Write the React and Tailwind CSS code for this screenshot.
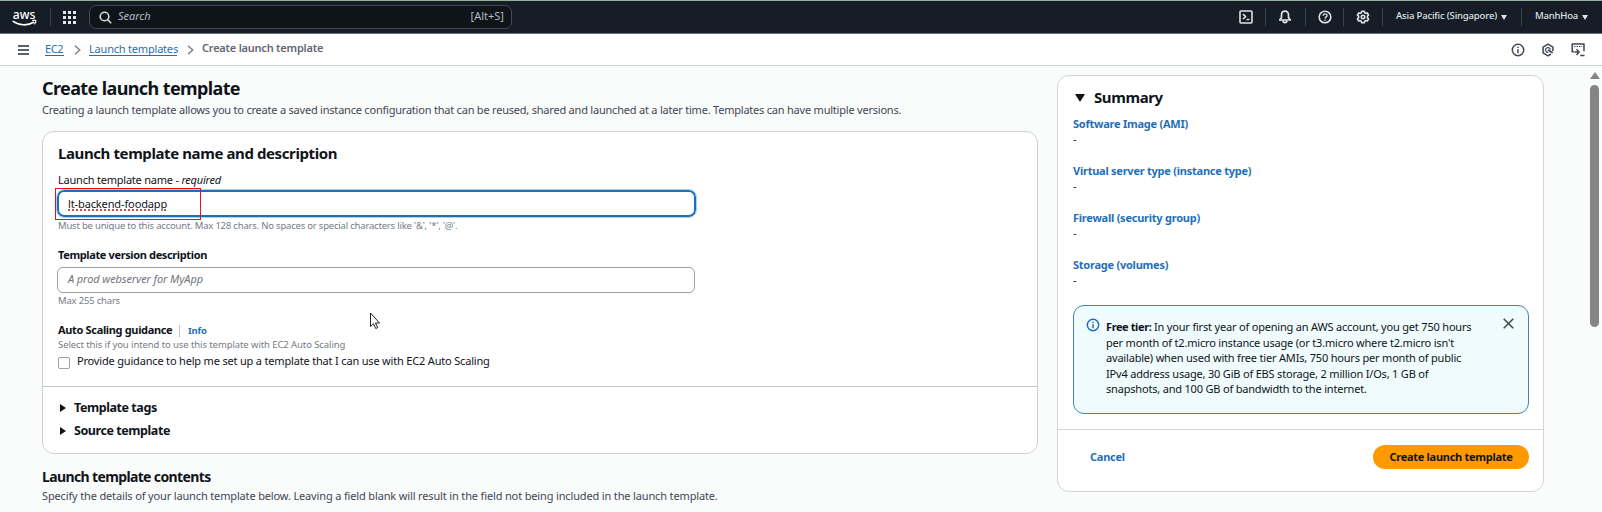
import React from "react";

function AwsLogo() {
  return (
    <svg width="26" height="26" viewBox="0 -6 26 26" fill="none">
      <text x="0.800" y="8.500" fontFamily="Noto Sans, sans-serif" fontSize="12.500" fontWeight="500" fill="#fff" textLength="22.500" lengthAdjust="spacingAndGlyphs">aws</text>
      <path d="M1.200 11.400c6 4.300 14.500 4.500 20.500.9" stroke="#fff" strokeWidth="1.600" strokeLinecap="round" />
      <path d="M20.600 10.500c1.200-.4 2.500-.5 3.200-.1.300.9-.2 2.400-1.200 3.500" stroke="#fff" strokeWidth="1.200" strokeLinecap="round" />
    </svg>
  );
}

function GridIcon() {
  return (
    <svg width="13" height="13" viewBox="0 0 13 13" fill="#e6e9ec">
      {[0, 5, 10].map((y) => [0, 5, 10].map((x) => <rect key={`${x}-${y}`} x={x} y={y} width="3" height="3" />))}
    </svg>
  );
}

function SearchIcon() {
  return (
    <svg width="13" height="13" viewBox="0 0 13 13" fill="none" stroke="#d5d9de" strokeWidth="1.600">
      <circle cx="5.500" cy="5.500" r="4.300" />
      <path d="M8.600 8.600l3.600 3.600" />
    </svg>
  );
}

const iconBase = { width: 14, height: 14, viewBox: "0 0 14 14", fill: "none", strokeWidth: 1.6, strokeLinejoin: "round" };

function ShellIcon() {
  return (
    <svg {...iconBase} stroke="#dfe3e8">
      <rect x="1" y="1" width="12" height="12" rx="1" />
      <path d="M4 4.200l2.600 2.400L4 9M7.600 9.500h2.800" />
    </svg>
  );
}

function BellIcon() {
  return (
    <svg {...iconBase} stroke="#dfe3e8" strokeWidth="1.700">
      <path d="M7 1.200c-2.300 0-3.500 1.600-3.500 3.800v2.400L1.700 10h10.600l-1.800-2.600V5c0-2.200-1.200-3.800-3.500-3.800z" />
      <path d="M5 10.300c.1 1.600.9 2.400 2 2.400s1.900-.8 2-2.400" />
    </svg>
  );
}

function HelpIcon() {
  return (
    <svg {...iconBase} stroke="#dfe3e8">
      <circle cx="7" cy="7" r="5.800" />
      <path d="M5.100 5.800c0-2.600 3.900-2.600 3.900-.1C9 7 7.100 6.900 7.100 8.500M7.100 9.500v1.300" strokeWidth="1.400" />
    </svg>
  );
}

function GearIcon() {
  return (
    <svg {...iconBase} stroke="#dfe3e8" strokeWidth="1.600">
      <path d="M5.700 1.200h2.600l.4 1.600 1 .6 1.600-.5 1.300 2.200-1.200 1.100v1.600l1.200 1.100-1.300 2.200-1.600-.5-1 .6-.4 1.600H5.700l-.4-1.600-1-.6-1.600.5-1.300-2.200 1.200-1.100V6.200L1.400 5.100l1.300-2.200 1.600.5 1-.6z" />
      <circle cx="7" cy="7" r="1.700" />
    </svg>
  );
}

function InfoIcon({ color }) {
  return (
    <svg {...iconBase} stroke={color} strokeWidth="1.500">
      <circle cx="7" cy="7" r="5.700" />
      <path d="M7 6.300v4M7 3.700v1.400" />
    </svg>
  );
}

function HexIcon() {
  return (
    <svg {...iconBase} stroke="#424650" strokeWidth="1.500">
      <path d="M11.900 8V4.100L7 1.200 2.100 4.100v5.800L7 12.800l3-1.800" />
      <path d="M9.300 6.600A2.400 2.400 0 1 0 7.400 9.300" strokeWidth="1.200" />
      <path d="M7 7l4.800 2.700" strokeWidth="1.700" />
    </svg>
  );
}

function PanelIcon() {
  return (
    <svg {...iconBase} stroke="#424650" strokeWidth="1.500">
      <path d="M3 8.800H1.200V1H13v7.200" />
      <path d="M3 3.500h8.200" strokeDasharray="1.500 1" strokeWidth="1.200" />
      <path d="M3.500 9h4.300M5.500 6.300L8.200 9l-2.700 2.900M9.200 12.400h4.300" />
    </svg>
  );
}

function Chevron() {
  return (
    <svg width="7" height="10" viewBox="0 0 7 10" fill="none" stroke="#7d838c" strokeWidth="1.500">
      <path d="M1 .8L5.700 5 1 9.200" />
    </svg>
  );
}

function Caret({ className, dir = "down" }) {
  return (
    <svg className={className} viewBox="0 0 10 8" preserveAspectRatio="none" fill="currentColor">
      <path d={dir === "down" ? "M0 0h10L5 8z" : dir === "up" ? "M0 8h10L5 0z" : "M0 0l10 4L0 8z"} />
    </svg>
  );
}

function Divider() {
  return <div className="h-[18px] w-px bg-[#3a424c]" />;
}

function TopBar() {
  return (
    <header className="flex h-[34px] items-center border-t border-b border-t-[#8fb596] border-b-[#6f757c] bg-[#161d26] text-[#dfe3e8]">
      <div className="w-[38px] pl-3"><AwsLogo /></div>
      <div className="ml-3"><Divider /></div>
      <div className="ml-3"><GridIcon /></div>
      <div className="ml-[13px] flex h-[24px] w-[423px] items-center rounded-[7px] border border-[#424a55] bg-[#0f141a] pr-[7px] pl-[9px]">
        <SearchIcon />
        <span className="ml-[6px] pb-px text-[11px] tracking-[-0.05px] text-[#b4bac2] italic">Search</span>
        <span className="ml-auto pb-px text-[11px] text-[#b4bac2]">[Alt+S]</span>
      </div>
      <div className="ml-auto flex items-center">
        <ShellIcon />
        <div className="ml-[12px]"><Divider /></div>
        <div className="ml-[12px]"><BellIcon /></div>
        <div className="ml-[13px]"><Divider /></div>
        <div className="ml-[12px]"><HelpIcon /></div>
        <div className="ml-[11px]"><Divider /></div>
        <div className="ml-[12px]"><GearIcon /></div>
        <div className="ml-[12px]"><Divider /></div>
        <div className="ml-[13px] w-[105px] pb-px text-[9.5px] font-medium tracking-[-0.16px] whitespace-nowrap">Asia Pacific (Singapore)</div>
        <Caret className="h-[5px] w-[6px]" />
        <div className="ml-[14px]"><Divider /></div>
        <div className="ml-[13px] w-[47px] pb-px text-[9.5px] font-medium tracking-[-0.2px]">ManhHoa</div>
        <Caret className="mr-[14px] h-[5px] w-[6px]" />
      </div>
    </header>
  );
}

function Breadcrumbs() {
  return (
    <nav className="flex h-[32px] items-center border-b border-[#cdd1d6] bg-white text-[11px] text-[#1f6fb8]">
      <div className="ml-[18px] flex w-[11px] flex-col gap-[2px]">
        <div className="h-[2px] bg-[#5b616a]" />
        <div className="h-[2px] bg-[#5b616a]" />
        <div className="h-[2px] bg-[#5b616a]" />
      </div>
      <a className="mb-px ml-[16px] w-[19px] border-b border-[#1f6fb8] leading-[13px] tracking-[-0.4px]">EC2</a>
      <div className="ml-[10px]"><Chevron /></div>
      <a className="mb-px ml-[8px] w-[88px] border-b border-[#1f6fb8] leading-[13px] tracking-[-0.2px] whitespace-nowrap">Launch templates</a>
      <div className="ml-[10px]"><Chevron /></div>
      <span className="mb-[2px] ml-[8px] font-semibold tracking-[-0.22px] text-[#62676f]">Create launch template</span>
      <div className="mr-[17px] ml-auto flex items-center gap-4">
        <InfoIcon color="#424650" />
        <HexIcon />
        <PanelIcon />
      </div>
    </nav>
  );
}

function TemplateForm() {
  return (
    <section className="mt-[13px] h-[323px] w-[996px] rounded-[12px] border border-[#ccd0d5] bg-white">
      <div className="h-[255px] border-b border-[#c2c6cb] px-[15px] pt-[10px]">
        <h2 className="text-[15px] leading-[22px] font-bold tracking-[-0.4px]">Launch template name and description</h2>
        <div className="mt-[8px] text-[11px] leading-[16px] tracking-[-0.22px]">
          Launch template name - <em>required</em>
        </div>
        <div className="relative mt-[2px] -ml-px flex h-[27px] w-[639px] items-center rounded-[7px] border-2 border-[#1f6fb8] pt-px pl-[9px] text-[11px] outline outline-[#a9d3ee]">
          <span className="tracking-[-0.12px] underline decoration-[#c0563f] decoration-dotted decoration-[1.500px] underline-offset-[2px]">lt-backend-foodapp</span>
          <div className="absolute -top-[4px] -left-[4px] h-[32px] w-[146px] border border-[#ee1111]" />
        </div>
        <div className="mt-[2px] text-[9.5px] leading-[14px] tracking-[-0.2px] text-[#757b84]">
          Must be unique to this account. Max 128 chars. No spaces or special characters like '&amp;', '*', '@'.
        </div>
        <div className="mt-[14px] text-[11px] leading-[16px] font-bold tracking-[-0.37px]">Template version description</div>
        <div className="mt-[4px] -ml-px flex h-[26px] w-[638px] items-center rounded-[6px] border border-[#9a9fa6] pb-px pl-[10px] text-[11px] tracking-[-0.1px] text-[#6f757d] italic">
          A prod webserver for MyApp
        </div>
        <div className="mt-px text-[9.5px] leading-[14px] tracking-[-0.19px] text-[#757b84]">Max 255 chars</div>
        <div className="mt-[15px] flex h-[16px] items-center text-[11px]">
          <span className="w-[121px] pb-px font-bold tracking-[-0.34px]">Auto Scaling guidance</span>
          <div className="h-[12px] w-px bg-[#c2c6cb]" />
          <a className="ml-[8px] text-[9.5px] font-bold tracking-[-0.2px] text-[#1f6fb8]">Info</a>
        </div>
        <div className="-mt-px text-[9.5px] leading-[14px] tracking-[-0.09px] text-[#757b84]">Select this if you intend to use this template with EC2 Auto Scaling</div>
        <label className="mt-px flex h-[16px] items-center text-[11px] tracking-[-0.18px]">
          <span className="mt-[3px] mr-[7px] size-[12px] rounded-[2px] border border-[#9a9fa6]" />
          Provide guidance to help me set up a template that I can use with EC2 Auto Scaling
        </label>
      </div>
      <div className="flex flex-col pt-[9px] pl-[17px] text-[12.5px] leading-[23px] font-bold tracking-[-0.43px]">
        <div className="flex items-center"><Caret dir="right" className="mr-[8px] h-[8px] w-[6px]" />Template tags</div>
        <div className="flex items-center"><Caret dir="right" className="mr-[8px] h-[8px] w-[6px]" />Source template</div>
      </div>
    </section>
  );
}

const summaryItems = [
  "Software Image (AMI)",
  "Virtual server type (instance type)",
  "Firewall (security group)",
  "Storage (volumes)",
];

const freeTierLines = [
  "per month of t2.micro instance usage (or t3.micro where t2.micro isn't",
  "available) when used with free tier AMIs, 750 hours per month of public",
  "IPv4 address usage, 30 GiB of EBS storage, 2 million I/Os, 1 GB of",
  "snapshots, and 100 GB of bandwidth to the internet.",
];

function Summary() {
  return (
    <aside className="mt-[9px] ml-[19px] h-[417px] w-[487px] rounded-[12px] border border-[#d2d6da] bg-white">
      <div className="h-[354px] border-b border-[#d2d6da] px-[15px] pt-[10px]">
        <h2 className="flex items-center pl-[2px] text-[15px] leading-[22px] font-bold tracking-[-0.4px]">
          <Caret className="mt-px mr-[9px] h-[8px] w-[10px]" />Summary
        </h2>
        <div className="mt-[8px] flex flex-col gap-[15px]">
          {summaryItems.map((item) => (
            <div key={item} className="text-[11px] leading-[16px]">
              <div className="font-bold tracking-[-0.24px] text-[#1f6fb8]">{item}</div>
              <div className="-mt-px mb-px">-</div>
            </div>
          ))}
        </div>
        <div className="mt-[16px] flex h-[109px] w-[456px] rounded-[11px] border border-[#3f86bb] bg-[#effbfc] pt-[12px] pl-[12px]">
          <InfoIcon color="#1f6fb8" />
          <div className="mt-px ml-[6px] w-[397px] text-[11px] leading-[15.600px] tracking-[-0.19px] whitespace-nowrap">
            <div><b className="tracking-[-0.4px]">Free tier:</b> In your first year of opening an AWS account, you get 750 hours</div>
            {freeTierLines.map((line) => <div key={line}>{line}</div>)}
          </div>
          <svg width="11" height="11" viewBox="0 0 11 11" stroke="#424650" strokeWidth="1.500"><path d="M.7.700l9.600 9.600M10.300.700L.7 10.300" /></svg>
        </div>
      </div>
      <div className="flex items-center justify-between pt-[15px] pr-[14px] pl-[32px] text-[11px] font-bold">
        <span className="tracking-[-0.25px] text-[#1f6fb8]">Cancel</span>
        <button className="h-[24px] w-[156px] rounded-full bg-[#ff9900] tracking-[-0.28px] whitespace-nowrap">Create launch template</button>
      </div>
    </aside>
  );
}

export default function App() {
  return (
    <div className="flex h-[512px] w-[1602px] flex-col overflow-hidden bg-[#fafcfc] font-['Noto_Sans',sans-serif] text-[#0f141a]">
      <TopBar />
      <Breadcrumbs />
      <div className="flex flex-1">
        <main className="ml-[42px] w-[996px] pt-[11px]">
          <h1 className="text-[18px] leading-[22px] font-bold tracking-[-0.61px]">Create launch template</h1>
          <p className="mt-[3px] text-[11px] leading-[16px] tracking-[-0.214px] text-[#424650]">
            Creating a launch template allows you to create a saved instance configuration that can be reused, shared and launched at a later time. Templates can have multiple versions.
          </p>
          <TemplateForm />
          <h2 className="mt-[13px] text-[14px] leading-[20px] font-bold tracking-[-0.63px]">Launch template contents</h2>
          <p className="text-[11px] leading-[18px] tracking-[-0.148px] text-[#424650]">
            Specify the details of your launch template below. Leaving a field blank will result in the field not being included in the launch template.
          </p>
        </main>
        <Summary />
        <div className="mr-[2px] ml-auto flex w-[11px] flex-col items-center pt-[6px] text-[#858585]">
          <Caret dir="up" className="h-[7px] w-[10px]" />
          <div className="mt-[6px] h-[242px] w-[9px] rounded-full bg-[#858585]" />
        </div>
      </div>
      <svg className="absolute top-[312px] left-[369px]" width="13" height="19" viewBox="0 0 13 19" fill="#fff" stroke="#222" strokeWidth="1">
        <path d="M1.500 1v13.500l3-2.800 2.200 4.800 2-.9-2.200-4.600h4z" />
      </svg>
    </div>
  );
}
